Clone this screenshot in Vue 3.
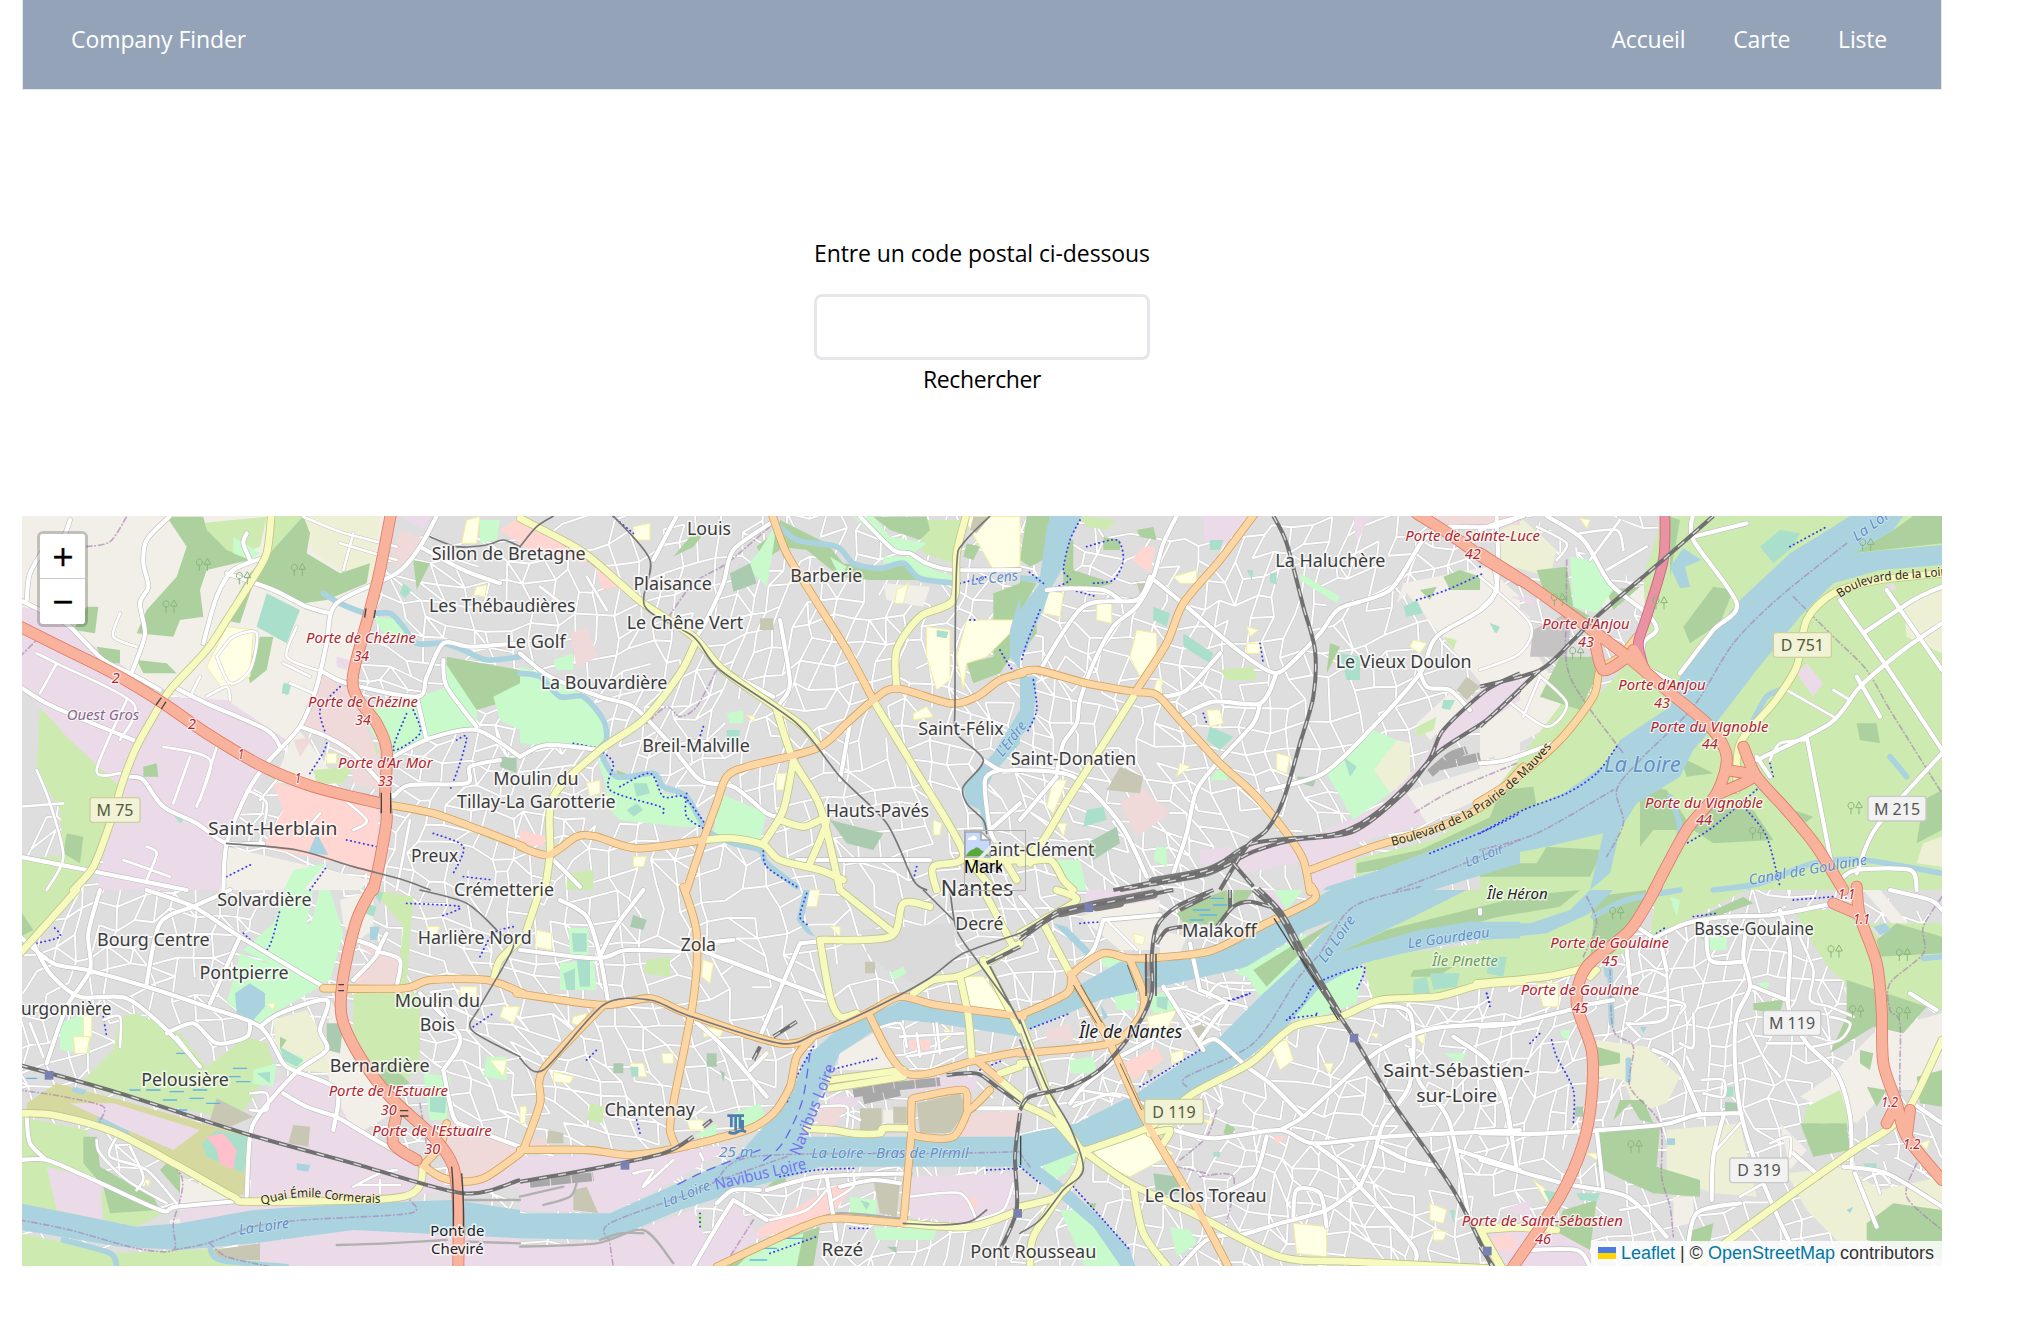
<script setup>
const links = ['Accueil', 'Carte', 'Liste']

// Map sheets: every sheet has its origin on the page and is drawn at three units per pixel.
const sheets = [
  {
    x: 20, y: 510,
    areas: {
      land: '0,0 1130,0 1060,290 980,500 860,640 780,720 360,500 0,290|760,820 830,650 960,820|620,1010 1050,1110 1020,1140 610,1140',
      industrial: '0,290 60,300 300,460 420,560 620,570 800,690 700,840 620,1000 600,1140 230,1140 300,830 140,680 50,580 0,530|950,440 990,450 980,480 950,470|1140,18 1230,18 1210,60',
      homes: '70,18 280,18 230,50 100,70|820,340 900,370 860,620 830,650 750,610 790,470|50,780 150,760 200,830 120,880 50,870',
      field: '850,18 1080,18 1060,200 960,180 880,130',
      grass: '740,18 850,18 830,120 760,160|60,590 150,680 210,720 340,700 300,850 230,1070 150,1140 0,1140 0,1040 130,1040 120,900 50,780|540,40 740,20 720,110 640,140 560,80|950,660 1040,660 1080,730 1000,740|880,780 1000,770 970,820 890,820',
      retail: '760,820 1080,880 1060,1100 960,1060 730,1010 790,900|1440,60 1500,20 1500,100',
      office: '900,490 990,540 1060,700 1100,850 1000,820 990,740 840,640|1140,60 1220,90 1140,190 1110,150|820,690 880,680 840,740',
      wood: '440,20 550,20 560,60 620,120 690,150 560,180 540,240 550,320 480,330 460,380 350,370 380,300 470,200 500,110|850,18 870,70 860,130 960,190 1050,160 1040,220 920,270 850,280 700,220 660,340 610,330 690,190 740,140|200,290 235,290 225,370 160,360|230,410 300,420 300,460 250,460|350,450 440,460 470,490 370,490|720,380 760,380 740,480 690,520 680,480|370,770 410,760 415,800 370,800|140,970 190,980 180,1060 130,1030|1180,150 1230,160 1190,240|1280,440 1500,480 1500,560 1370,600 1280,560',
      park: '1050,600 1110,590 1190,560 1220,690 1110,740 1050,660|640,80 720,130 690,150 640,130|1270,450 1280,530 1200,560 1220,690 1370,650 1370,600|1060,320 1150,330 1190,400 1090,370|1420,560 1500,520 1500,660 1440,630|820,1080 920,1060 850,1140 790,1140|1380,30 1440,30 1430,90 1380,100',
      school: '560,470 620,350 700,360 690,500 610,540|1340,30 1380,20 1370,100 1325,100|1370,230 1400,225 1395,260 1360,255|920,730 950,730 950,760 920,760',
      pitch: '740,250 840,300 800,400 710,350|1150,220 1175,240 1155,265 1140,250|790,520 815,520 805,555 785,550|460,915 495,925 480,940',
      cemetery: '1445,740 1490,745 1490,790 1440,770', brown: '', water: '890,970 925,1035 865,1030',
    },
    lines: {
      stream: '910,250 960,280 1040,310 1110,310 1150,350 1190,400 1270,400 1330,420 1400,450 1500,440',
      border: '0,440 60,380|200,110 270,95 320,20',
      footpath: '1180,600 1200,670 1120,720 1160,610|1310,690 1340,680 1320,760 1290,840|960,530 900,600 920,700 870,790|980,990 1070,1010|1240,970 1330,1010 1300,1090|620,1100 700,1060|1330,1100 1420,1110|870,1140 920,1070',
      street: '430,710 570,750 530,890|50,430 110,460 340,580 300,690|110,460 60,550|510,740 460,880|590,710 540,870|320,570 230,780 300,790|300,310 280,380 350,410|540,500 510,560|560,560 620,530 630,570|590,440 640,380 710,370 690,480 630,520 590,440|960,100 1130,150|1000,70 970,180|850,20 960,65 1130,110|830,350 800,440 890,480|790,460 870,500|810,520 880,550|380,1010 410,1030 380,1110|310,1050 450,1100|680,840 740,880 720,1000|770,810 720,870|960,860 1040,930 1000,960|900,910 840,980|1130,1140 1170,930|50,780 90,880 130,1040 80,1140|0,890 130,880',
      white: '450,18 380,90 370,160 385,230 360,280 375,370 350,450 330,500|0,270 100,320 150,350 250,450 330,490 420,540|620,190 760,240 860,290 930,310|1250,18 1200,110 1130,190 950,280 920,400 890,530 840,650 740,760 680,850 620,1000 610,1140|840,650 920,680 1000,730 1120,860|0,530 100,590 340,690|330,800 370,810 430,890 530,940 620,1000 730,1000|0,1040 200,1080 350,1110 500,1140|740,140 640,180 590,260 550,400|900,480 980,520 1190,560 1220,500 1270,400 1350,410 1500,400|1120,740 1230,685 1370,660 1500,740|1120,860 1170,825 1340,820 1350,770 1440,750|460,530 560,580 740,660 780,710|1270,450 1280,530 1370,650|1190,560 1220,690|150,30 130,80 80,110 30,190 20,270|680,70 670,100 690,150|1200,110 1330,180 1440,220',
      tram: '620,1000 830,1020 1000,1070 1150,1110 1230,1140|1230,80 1310,110 1400,105 1450,90 1500,110',
      yellow: '755,0 740,130 690,220 620,330 560,420 450,540 400,620 350,710 310,810 270,940 220,1070 160,1140',
      orange: '1110,885 1240,910 1380,960 1510,1010',
      red: '0,350 120,410 280,490 430,580 560,670 730,770 880,830 1080,880|1115,0 1080,180 1050,300 1000,490 1010,560 1070,640 1100,720 1095,860 1100,930 1080,1050 1060,1140',
      trunk: '', rail: '', yard: '',
    },
  },
  {
    x: 520, y: 510,
    areas: {
      land: '1090,220 1230,230 1210,290 1100,270', industrial: '', homes: '', field: '', grass: '1200,30 1340,30 1300,160 1210,130|140,1090 220,1080 220,1140 140,1140',
      retail: '0,20 70,60 150,90 210,160 120,140 0,110|220,160 270,170 330,240 280,230 250,240|0,960 80,980 70,1010 0,1000',
      office: '150,370 200,355 235,440 170,470',
      wood: '780,30 920,100 970,160 1090,170 1190,160 1220,210 1050,210 960,200 860,120 780,110|710,110 770,60 780,120 730,150|1420,250 1500,220 1500,400 1440,490 1360,520 1340,460 1420,440|510,80 560,60 520,110 460,140|150,600 190,600 150,680 120,650|290,780 340,800 340,830 290,830|1060,20 1110,60 1200,90 1230,60 1220,20|1340,100 1380,110 1360,150 1330,140',
      park: '0,470 100,500 200,560 260,650 240,720 0,700|230,740 280,800 400,790 430,850 500,860 560,950 480,950 300,930 270,900 250,800|600,850 740,910 720,990 580,970|770,40 760,110 740,230 680,170 720,120|1000,20 1060,20 1110,80 1220,100 1180,130 1100,110|1090,140 1190,140 1240,180 1310,200 1300,220 1200,200 1150,160 1090,160|620,610 670,600 670,640 630,640|930,140 980,170 960,200|100,450 160,430 160,480 110,480',
      school: '1330,20 1500,20 1500,170 1420,180 1380,110|1340,330 1480,330 1470,370 1400,440 1340,460 1330,540 1310,440|1220,350 1290,360 1290,510 1250,540 1220,440|340,50 390,40 390,90 340,90|1180,610 1220,590 1240,620 1180,630|200,820 240,810 240,850 210,860|1130,240 1165,220 1150,280 1125,280|770,790 800,790 790,840 770,840|1240,930 1265,940 1260,975 1240,975|680,615 705,620 700,635|340,1040 380,1040 370,1070 340,1070',
      pitch: '320,900 350,880 370,900 340,920|340,820 380,820 390,850 350,860|1250,360 1285,365 1280,385 1250,380|620,660 660,660 655,710 620,700',
      cemetery: '630,190 690,160 710,220 640,245|930,930 1090,970 1060,1020 980,1000',
      brown: '720,325 760,325 760,360 720,360|1360,20 1410,20 1370,70 1350,60',
      water: '1500,260 1470,360 1470,440 1500,480|1500,600 1420,730 1330,830 1340,880 1380,900 1390,960 1410,960 1390,860 1420,790 1500,700',
    },
    lines: {
      stream: '760,30 830,90 950,110 1000,160 1080,175 1150,160 1200,205 1310,220|0,490 60,500 120,560 190,560 250,630 260,690 240,720 290,800 400,790 430,830 500,860 560,960 640,1000 720,1020 740,1060 830,1130',
      border: '750,50 620,160 520,220 440,330|590,480 530,590 480,620 440,590 380,640|370,280 200,150 80,70',
      footpath: '240,720 280,760 270,840 420,890 430,910|300,830 390,790 430,860 490,860 540,920 560,950|500,850 500,920 560,960|280,20 340,70|1320,220 1400,200|1440,420 1470,470 1500,500|550,650 540,680|1190,1070 1180,1110|160,700 240,715|730,1010 740,1070 830,1130|1350,330 1370,330',
      street: '60,230 150,300|200,200 260,300',
      white: '750,40 640,120 610,220 560,330 530,380|1020,20 1120,120 1170,130 1220,160 1300,180 1500,180|0,430 90,500 240,560 340,590 440,690 540,810 640,830 740,910 780,920|0,740 80,705 240,720|470,18 400,150|1390,750 1440,780 1500,780|1440,780 1395,810 1410,960 1430,1000|100,1050 180,1130|990,640 960,810|830,1050 1230,1050|780,330 810,520 780,580|610,480 760,560|1410,960 1500,880',
      tram: '280,18 390,150 375,290 520,380 600,480 830,640 960,800 1100,940 1180,1110 1220,1140|0,110 50,50 100,18|1410,18 1330,100 1310,170 1305,580 1310,670 1390,750 1330,830 1340,880 1390,930 1400,970',
      yellow: '0,25 180,120 300,220 370,280 520,380 610,480 780,600 850,650 890,700|525,400 480,490 370,630 240,720 100,860 90,1030 75,1140|1340,10 1310,130 1300,270 1200,320 1130,420 1130,535|1065,580 1180,770 1330,1030 1240,1070 1250,1140|770,600 820,750 900,890 960,1140|820,750 790,900 730,1000|780,930 850,950 920,930 870,1060|550,990 640,985 730,1005 780,1050 900,1080 970,1110|1330,1030 1420,1050 1500,1050|1330,1030 1420,1140|1430,1010 1490,1110',
      orange: '755,10 800,130 880,260 980,420 1060,570|0,1010 85,1035 170,980 230,980 350,1015 550,990|500,1140 550,990 590,880 620,800 680,770 890,715 980,640 1060,570 1130,535 1290,580 1370,560 1440,510 1510,490',
      red: '', trunk: '', rail: '', yard: '',
    },
  },
  {
    x: 1020, y: 510,
    areas: {
      land: '1130,280 1150,220 1400,170 1500,260 1500,470 1400,540 1250,360 1160,250|1380,640 1500,580 1500,730 1430,760|1200,830 1500,740 1500,810 1220,940 1160,850|1190,640 1300,540 1350,580 1230,690',
      industrial: '550,18 690,18 600,120 550,90|1000,18 1050,18 1010,100|1500,500 1500,570 1380,650 1260,730 1140,860 1000,960 830,1060 670,1090 640,1060 700,1000 950,970 1080,890 1200,760 1280,640 1400,520|850,990 1160,850 1220,940 1010,1000 1000,1140 880,1140|540,1020 640,1010 600,1080 540,1060',
      homes: '', field: '1430,60 1500,50 1500,150 1440,130|1060,780 1130,690 1170,700 1170,800 1110,850',
      grass: '1000,1050 1240,990 1500,830 1500,880 1240,1020 1010,1100|180,18 290,30 260,60 200,50|600,480 700,470 710,510 620,510|1190,650 1250,620 1240,660 1190,680|1270,380 1310,390 1300,420',
      retail: '370,110 405,110 390,190 335,150', office: '300,880 370,835 450,910 350,980|1240,18 1500,18 1500,45 1290,45',
      wood: '0,210 50,220 0,310|20,18 90,18 70,150 30,170 0,150|130,90 160,90 160,180 280,220 200,240 130,230|0,340 50,320 50,370 10,420|350,60 400,50 410,90 360,80|1270,200 1320,180 1380,200 1380,240 1290,240|930,400 960,410 920,490|1010,1060 1200,1020 1500,880 1500,910 1240,1020 1080,1080 1010,1090|250,80 300,90 300,120 250,120|1200,240 1250,230 1230,270',
      park: '920,790 1060,660 1130,690 1060,780 1110,850 1000,930|110,1050 180,1050 200,1140 130,1140|410,1010 440,1010 440,1070 400,1050|840,190 960,260 950,280 840,210|590,780 630,780 620,810 570,810',
      school: '350,360 410,370 410,450 360,500 330,440|80,240 130,250 120,320 70,310|230,280 275,280 275,340 230,330|100,810 140,810 100,910 80,890|560,600 600,600 610,640 570,650|770,730 810,740 800,790 770,780|460,200 530,180 530,220 480,220|680,400 720,400 720,430 680,430|1180,390 1220,400 1200,430 1170,410|480,760 510,770 470,800|410,510 430,510 420,550 400,550|680,350 715,360 690,380|110,940 140,940 130,980',
      pitch: '400,290 450,310 440,350 400,330|570,650 640,680 600,720 560,690|490,370 580,430 570,460 490,410|570,90 610,90 600,120 570,120|1150,290 1190,270 1210,310 1160,320|1270,570 1305,570 1290,600 1265,595|960,430 1020,440 1020,510 980,510|200,900 250,890 260,930 190,950|750,190 770,190 770,225 750,215|680,180 700,180 695,210|970,740 1010,770 990,800|1410,340 1440,350 1430,370',
      cemetery: '200,1000 290,950 300,1000 220,1050|830,800 890,800 880,830 840,820', brown: '300,770 370,800 360,850 260,840|1340,500 1380,530 1340,570 1310,540|350,220 380,220 360,250',
      water: '90,18 185,18 150,90 130,170 90,240 70,300 40,360 20,420 0,440 0,300 60,220 0,210 0,195 60,200 70,130 80,60|0,480 20,500 50,500 40,640 0,680|1500,910 1240,1020 1080,1080 920,1130 910,1140 1240,1140 1500,1060',
    },
    lines: {
      stream: '', border: '1130,1140 1260,1090 1500,990|1490,760 1300,840 1180,910',
      footpath: '180,30 150,90 130,180 150,210 90,240|200,110 290,90 310,150 280,210 220,220|60,300 20,400 5,450|40,510 50,600 20,670|120,230 230,260|1190,270 1280,240 1390,190|1230,1030 1400,960 1500,910|720,400 730,460|550,610 560,640|70,220 20,180|600,1080 640,1030',
      street: '',
      white: '470,18 430,100 400,200 350,290 280,350 220,460 180,570 170,640 130,700 110,790|0,780 160,800 300,940 380,1100|390,200 500,290 640,410 740,480 790,480 900,370 960,295 1110,240 1210,90 1290,50|60,480 190,290 350,270 390,200|430,560 500,540 600,430|480,620 580,575 720,580 770,490|720,580 700,640 600,750 530,840 500,970 460,1090|1430,18 1420,260 1250,380 1200,490 1050,660 910,790 740,840|1500,20 1420,50 1290,50|1190,450 1220,530 1290,540 1350,600|80,240 150,235 250,240 300,270|0,930 110,800',
      tram: '',
      yellow: '340,560 220,750 130,890 70,990 0,1060|0,1060 90,1050 130,1110 160,1140|0,1020 30,1060',
      orange: '705,10 600,150 490,280 440,400 350,540|-10,492 50,480 200,520 340,545 410,555 480,630 600,760 700,850 800,970 850,1050 870,1145|1510,770 1400,880 1260,950 1060,1010 870,1080',
      red: '1190,10 1300,80 1400,150 1500,210', trunk: '',
      rail: '760,18 800,100 850,290 885,420 880,560 840,700 790,870 740,960 680,1010 600,1140|1500,490 1400,540 1270,660 1220,760 1080,900 950,970 700,1000 560,1080 280,1140|1500,540 1400,630 1250,730 1150,850 1000,965 820,990 700,1025 560,1090 300,1140|640,1060 700,1130',
      yard: '1230,790 1290,740 1340,720|1250,770 1380,740', depot: '400,1115 560,1085 650,1040',
    },
  },
  {
    x: 1480, y: 510,
    areas: {
      homes: '150,18 400,18 530,80 520,190 400,200 300,120|1000,640 1050,500 1160,470 1140,600 980,690|520,500 600,420 700,330 780,270 600,500',
      grass: '540,18 1386,18 1386,1140 0,1140 0,900 260,560 350,560 500,400 490,200 530,80',
      land: '0,180 50,240 150,320 150,400 250,560 230,640 0,760|340,200 420,290 370,300|1060,260 1386,220 1386,480 1240,450 1180,500 1160,600 1060,680 1050,720 920,760 820,740 850,650 920,540 970,460|0,830 0,770 210,690 120,790|440,250 520,210 490,300|1330,960 1386,930 1386,1080 1300,1060|800,240 900,170 600,500|900,800 960,790 940,830|1180,520 1220,540 1190,560',
      industrial: '0,560 180,490 0,640|980,460 1030,520 1000,560 950,490|90,260 160,260 160,285|1200,240 1240,220 1250,240',
      field: '60,60 130,30 230,120 210,200 60,160|1270,280 1386,240 1386,430 1280,380|1330,1000 1386,980 1386,1070 1310,1060', retail: '', office: '0,18 130,18 0,60',
      wood: '170,180 260,170 280,290 350,330 330,380 200,270|240,440 340,440 350,500 300,600 180,560|1386,18 1300,18 1240,60 1120,130 1386,100|60,840 160,830 170,890 20,950|700,890 820,900 880,990 700,1000 640,960|1130,640 1190,640 1200,700 1140,690|1330,870 1386,840 1386,960 1310,1000|700,230 760,240 720,340 630,400 610,350|480,820 560,840 640,960 520,960 480,1010|0,1060 170,1060 200,1010 370,1020 330,1100 0,1100|600,740 700,790 620,800|930,150 1060,70 990,170|940,900 1000,920 960,950|380,240 480,230 400,300|570,20 600,30 570,200',
      park: '270,140 340,150 400,240 350,310 280,290|890,190 980,110 960,180', school: '300,25 330,30 320,55', pitch: '840,110 900,60 960,70 940,110 880,160|30,340 55,350 45,370|760,1130 820,1120 810,1140', cemetery: '', brown: '', quarry: '160,360 280,300 260,440 150,440',
      water: '1270,18 1110,18 1060,50 930,130 780,270 700,370 600,500 570,590 420,690 380,760 250,850 130,900 0,960 0,1050 200,1010 370,970 330,1140 390,1090 420,960 470,880 600,800 640,720 700,650 830,480 960,320 1060,220 1200,180 1386,165 1386,105 1120,130 1240,60|570,170 610,115 665,150 615,170 630,230 600,235',
    },
    lines: {
      stream: '1386,1090 1150,1050 1000,1060 840,1120 700,1140|820,630 860,560 900,540|560,1090 600,960 570,860|1230,740 1280,800',
      border: '1100,100 900,260 760,400 640,590 480,750 410,840 430,940 380,1040|0,1020 170,970 400,840|260,150 260,300 270,500 430,730|940,260 1060,380 1160,480 1230,600 1386,850',
      footpath: '930,110 1040,50|0,970 130,900 260,850 350,790 410,710|800,900 860,980 900,1130|840,830 700,950 620,1000|0,170 20,140|870,760 880,800', street: '870,750 900,700 980,690|1060,540 1110,570|170,50 260,100 230,150|300,70 410,60 430,120|380,180 500,110|330,150 420,30|920,540 1060,620|0,480 120,430 150,340 0,200|170,490 260,580 200,650 80,570|130,620 180,500',
      white: '640,10 640,90 770,280 700,360 600,490|130,18 50,40 0,60|200,18 310,90 390,220 500,310 530,360 490,400 500,470 570,510|1386,730 1190,950 1130,1090|980,680 1060,1090|830,750 1050,640 1140,530 1270,420 1386,340|1080,270 1220,470 1386,720|1080,1110 1130,1080 1290,1080 1310,1140|0,300 50,240 40,160|640,80 800,40|830,740 870,800|1150,370 1300,270 1386,230|1220,240 1386,480|1130,500 1200,620|0,760 80,750 220,700', tram: '',
      yellow: '770,840 780,700 880,580 950,470 980,330 1060,250 1200,210 1386,190',
      orange: '470,380 420,440 360,480 340,560 240,690 100,810 -10,880',
      red: '0,130 140,220 280,320 430,430 560,540 690,650 740,740 710,850 620,960 520,1145|790,710 830,800 920,900 1010,1010 1090,1140|740,780 820,800 720,850|345,400 370,480 430,450|460,420 500,490',
      trunk: '555,10 550,150 500,320 475,400 490,470',
      rail: '700,18 560,140 350,320 280,390 180,480 0,530|180,480 0,650', yard: '',
    },
  },
  {
    x: 20, y: 890,
    areas: {
      land: '930,330 1100,600 1150,650 1000,740 940,700 920,500|480,860 660,930 640,950 480,960|450,990 560,970 560,1010 450,1010|960,30 1060,0 1060,120 1000,160 970,100', homes: '',
      grass: '0,0 170,0 40,160 0,190|300,380 350,370 480,430 560,530 680,440 740,460 760,520 700,620 650,690 300,620 180,580 280,480|0,680 200,720 230,900 430,970 350,1010 0,940|1000,310 1200,310 1200,540 1100,600 1000,430|1060,0 1180,20 1160,290 1130,290 1150,110|0,1030 290,1090 720,1070 720,1130 0,1130',
      industrial: '740,590 830,545 930,590 1000,720 1200,800 1290,900 1100,930 690,930 700,720|80,830 240,870 250,990 110,960|480,960 700,930 1170,930 1170,945 480,1000|720,1060 1000,1020 1500,1040 1500,1130 720,1130|1330,870 1500,810 1500,890 1330,910',
      field: '760,390 860,360 910,440 930,550 830,540 770,500', retail: '1000,240 1050,250 1050,285 1010,285', office: '1000,150 1140,200 1120,290 1010,290 1060,200|1260,690 1500,760 1500,810 1330,870 1290,800',
      scrub: '20,640 110,580 300,630 690,740 680,910 640,920 480,830 280,720 20,670',
      wood: '190,740 230,740 240,830 400,920 420,960 270,970 250,890 190,820|440,820 480,850 480,910 420,840|0,60 40,120 0,140|780,440 800,450 780,480|1060,580 1110,520 1170,580 1110,600',
      park: '880,0 860,100 970,130 930,270 880,290 670,180 760,100 800,0|900,0 930,0 970,130 870,110|660,190 770,230 900,290 760,370 720,400 620,340|120,400 200,370 210,490 120,480|700,540 770,520 760,590 700,580|770,480 850,500 850,540 790,530|1210,550 1290,560 1280,690 1230,690|1400,500 1460,500 1460,570 1390,560',
      school: '190,380 215,370 215,440 190,440|160,440 210,440 200,490 165,490|1320,290 1370,290 1370,330 1320,320|1450,350 1500,350 1480,400 1440,380|740,340 765,340 760,360|1410,510 1460,510 1450,560|370,870 390,870 385,890|1220,110 1260,110 1240,150',
      pitch: '590,720 690,740 670,850 560,800 545,760|1060,10 1090,5 1080,40|1040,40 1070,50 1060,80 1035,70|780,470 850,510 830,530 790,510|710,550 750,545 750,580|1230,620 1280,620 1275,670 1230,665',
      pink: '560,740 610,730 650,780 640,840 600,820 590,780', dusk: '150,640 280,640 540,720 460,780 300,710',
      cemetery: '920,400 970,400 960,490 920,480', brown: '590,625 700,680 630,710 570,690|820,705 870,710 865,770 805,760|720,1060 580,1080 600,1110 720,1110',
      water: '0,940 150,970 350,1010 480,1000 700,960 1000,940 1300,930 1500,960 1500,1045 1000,1020 700,1060 480,1080 300,1070 0,1020|645,310 690,280 735,310 735,350 700,390 650,370|1050,110 1080,110 1070,150 1050,150|160,590 200,600 190,615 155,605|830,820 870,825 865,845 830,840',
    },
    lines: {
      stream: '130,1050 270,1090 290,1130|570,1070 600,1110 800,1130|240,690 320,730',
      border: '0,990 150,1020 350,1075 460,1080 460,1000 480,850 280,730 240,700 250,650 130,620 0,600|460,1080 560,1060 700,1010 850,990 1170,970 1170,930|570,1060 620,1100 750,1130|1200,640 1230,830',
      footpath: '50,160 120,140 100,110|670,130 740,180 780,60|1160,40 1320,50 1260,80|1380,200 1420,130 1480,110|250,380 260,440|1360,410 1420,370',
      marsh: '470,490 500,490|640,535 680,535|620,560 660,560|380,600 420,600|450,605 490,605|520,600 560,600|430,630 470,630|510,625 550,625|460,660 500,660|560,640 600,640|650,575 690,575|330,600 360,600|20,565 50,565',
      street: '230,750 240,790 320,870 440,940|290,740 270,800 380,840 470,940|330,770 370,860 350,900|0,380 60,360 120,370|30,400 70,500|1000,890 1080,850 1130,840|1010,885 1140,885|1080,870 1080,910|250,390 300,380 300,470|690,610 740,610 740,660 690,660|470,440 540,530',
      white: '0,140 100,220 200,240 380,290 560,350 720,410 790,520 830,545 950,600 940,720|380,0 520,50 660,140 910,290|720,410 780,370 920,330 900,420 920,480 830,545 720,670 690,740 680,920|40,160 90,250 180,320 320,325 440,420 540,530|240,0 205,130 210,240 140,350 80,520|520,50 420,100 380,280|660,140 570,340|440,430 520,400 590,460 680,440 690,400|0,810 80,810 200,860 420,960 470,950 690,930|20,680 30,760 80,810|950,680 1050,740 1190,820|790,610 860,650 950,680|1010,150 1075,185 1000,270|1270,540 1300,680 1340,710 1500,770|1075,185 1140,210 1130,290|1200,310 1320,440 1270,540|1100,130 1070,190|630,0 520,50',
      tram: '1500,500 1355,420 1380,350 1480,170 1440,130 1340,40 1200,0',
      yellow: '170,0 90,90 0,190|0,670 100,675 280,725 480,830 640,920 700,935 1150,920 1210,830|1500,150 1440,210 1420,270',
      orange: '910,295 1150,295 1230,270 1400,270 1510,310|1200,820 1260,860 1330,875 1400,860 1500,790|1215,820 1260,770 1280,700',
      red: '1060,-10 1010,90 970,260 965,380 1020,500 1110,620 1240,740 1300,830 1315,960 1315,1130|1130,670 1120,760 1190,810', trunk: '',
      rail: '0,525 300,610 690,735 1000,820 1330,910 1500,870', yard: '',
      spur: '1330,930 1500,930|950,1065 1100,1060 1280,1050|1340,1055 1500,1060',
    },
  },
  {
    x: 520, y: 890,
    areas: {
      land: '960,490 1060,430 1140,540 950,540|1090,660 1120,660 1120,700 1090,700', homes: '', field: '', grass: '500,990 550,970 550,1020 520,1030|380,210 450,200 450,260 370,250|210,640 250,650 250,700 200,690',
      industrial: '0,800 450,790 650,760 450,880 270,970 0,960|0,1070 270,1050 520,960 560,1050 640,930 720,1040 600,1130 0,1130|1170,860 1480,850 1480,960 1340,1000 1170,980|1220,560 1370,560 1370,600 1160,600|930,620 1020,620 1010,650 930,650',
      retail: '710,1020 960,880 1000,890 930,980 720,1045|1340,920 1375,925 1370,955 1340,955|1170,450 1230,450 1230,480 1170,480', office: '1300,740 1360,670 1500,660 1500,740|900,650 980,650 940,710 890,710|0,760 60,740 100,760 0,780',
      wood: '600,1130 750,1060 900,1010 880,1130|890,820 940,820 930,835|740,890 790,850 800,880',
      park: '640,670 720,640 740,690 660,730|520,740 590,700 590,740|990,920 1070,930 1070,980 990,980|1060,1010 1250,1020 1240,1050 1070,1050|120,220 220,210 230,300 120,300|145,115 205,115 205,195 150,195|1110,250 1150,230 1160,250 1120,270|700,1080 850,1030 830,1130 650,1130',
      school: '50,120 95,130 95,180 45,170|1330,260 1390,260 1480,380 1350,350|160,380 200,370 190,410 155,400|500,690 550,690 550,720 510,720|550,410 610,420 600,440 550,440|860,0 900,0 890,50 860,50|330,520 370,520 380,560 340,560|100,545 160,560 150,580 100,575|425,490 460,490 460,520 430,520|550,210 580,220 570,280 545,260|0,650 20,650 15,700 0,700|930,110 960,110 960,140|720,490 750,495 730,510|1270,420 1290,420 1285,450',
      pitch: '155,130 200,130 200,185 160,185|130,250 165,235 165,300 140,300|170,210 210,210 210,290 180,290|330,530 355,530 355,560 335,560|1020,930 1050,940 1040,960',
      cemetery: '340,75 380,90 370,120 330,110|560,490 590,490 590,530 560,530|280,520 310,520 310,550 280,550|600,540 615,550 610,575|1100,1070 1130,1070 1130,1090', brown: '1190,640 1320,610 1340,660 1290,730 1200,730|1020,655 1085,655 1085,720 1020,720|1060,870 1140,880 1130,980 1080,970|160,900 200,890 235,970 160,960|1120,650 1160,650 1160,700 1120,700|85,720 130,730 130,760 80,760|1035,215 1065,215 1065,250 1035,250',
      water: '0,970 270,970 450,890 650,800 740,700 810,620 860,500 950,420 1150,330 1500,375 1500,440 1250,400 1150,390 1050,430 960,490 900,620 850,740 1500,740 1500,830 900,830 850,850 700,890 480,960 270,1050 0,1045|850,0 870,0 850,90 885,140 860,130 830,90',
      plain: '1020,120 1300,100 1310,200 1200,290 1100,240 1040,190',
    },
    lines: {
      stream: '',
      border: '1500,785 1300,790 700,800 560,890 270,1000 270,1060 280,1130|800,800 600,870|700,990 630,1100',
      ferry: '870,490 850,620 820,700 780,770 720,820|720,780 640,810 540,850 470,885',
      footpath: '930,540 1070,505|880,470 830,560 800,640|780,860 890,840 1000,835|1400,840 1500,835|540,970 540,1020|750,1090 890,1040|200,510 230,480|860,10 840,80 870,110|990,1015 1050,1015|350,690 360,730|1380,540 1450,510', marsh: '780,1045 850,1045|720,1075 770,1075|690,1110 740,1110', street: '900,650 980,650 980,710|980,670 1020,690|920,900 860,960 750,990|1000,850 1000,890 940,930|1170,920 1320,910 1370,990|340,850 400,840 370,890 460,810|1480,880 1450,960 1370,990|1060,420 1140,400 1160,470|1160,500 1330,470|1190,430 1200,500|1250,400 1260,490|1140,440 1330,430|500,690 560,650|540,790 550,810',
      white: '120,30 200,80 240,200 265,340|0,180 230,205 320,180 480,185|540,180 790,275 940,330|840,160 720,440|540,160 640,150|740,900 900,860 1170,850|520,1130 590,1010 640,930|920,860 940,980 950,1050|1500,655 1370,655|590,940 640,900 720,900|840,160 890,155|690,540 740,490|370,0 280,120 240,200|500,370 620,480 740,620|640,930 740,990|960,890 1060,870 1140,880',
      tram: '1210,0 1300,90|1290,0 1310,120 1370,210 1480,360|1500,130 1330,190 1220,270 1050,360 890,430 780,460 500,375 390,330 250,345 70,540 0,505|1150,1000 1260,1005 1350,995 1400,960|1410,230 1500,400',
      yellow: '900,150 1110,140 1150,40 1230,50|900,150 930,320 960,380 1010,370|960,0 1110,120|1180,310 1240,270 1310,260 1380,230 1500,160|1320,260 1345,380 1355,500|1390,0 1480,170|1390,210 1500,420|930,570 1150,540|930,595 1150,560|860,715 940,720 1000,730 1080,730 1090,715 1170,715|1150,1000 1350,1010 1500,960|1440,570 1500,620|1440,550 1500,530|60,0 20,120',
      orange: '490,-10 530,130 520,330 460,640 450,720 470,775|-10,310 250,345 390,325 500,370 780,460 900,430 1040,370 1140,320 1250,345 1510,380|250,345 70,540 60,640 10,780|0,780 200,780 330,795 470,775 680,720 760,670 810,590 830,500 880,440|1045,370 1160,550 1370,510 1500,485|1370,510 1440,570|1180,625 1330,600 1345,660 1410,600|1175,630 1175,720 1200,740 1300,740 1345,660|1175,720 1150,1000|590,1130 850,1010 950,985 1150,1000', red: '', trunk: '',
      rail: '0,875 200,840 430,790 520,740|1500,640 1430,590 1370,550 1280,555|1500,670 1485,800 1490,960 1440,1080|1500,170 1400,220|760,440 830,395|550,710 575,690|700,510 720,470',
      yard: '1000,610 1120,590 1260,575|30,880 220,860|1030,630 1140,605', spur: '0,1070 230,1060 370,1020 460,1120|70,945 150,920 170,880|0,920 130,890|240,1050 300,1030 370,1030|650,1105 850,1010 950,970 1140,985',
    },
  },
  {
    x: 1020, y: 890,
    areas: {
      land: '180,80 260,50 420,30 400,180 300,180|420,120 500,140 480,190 420,190', homes: '', field: '',
      grass: '1340,0 1500,0 1500,95 1350,95 1200,120 960,185 1180,80|1150,190 1500,145 1500,270 1220,320 1060,330 1030,220|280,750 320,750 320,770 280,770',
      industrial: '1390,1040 1500,990 1500,1130 1440,1130|200,0 430,0 410,30 200,60|720,0 760,0 790,50 780,70', retail: '310,520 410,470 430,510 340,570|760,740 800,735 770,765|1400,1050 1460,1030 1500,1060 1440,1070', office: '80,420 150,400 160,450 80,460',
      wood: '960,185 1100,120 1500,20 1500,60 1200,150|470,70 560,20 620,0 630,60 590,105 490,100|640,0 700,0 680,30 640,40|1180,240 1300,230 1250,260 1170,260|620,700 645,715 635,740 610,730|200,940 230,940 220,960',
      park: '640,250 860,130 830,220 720,320 680,260|800,390 880,290 1030,225 1010,340 900,380|120,960 190,960 260,1020 330,1140 200,1140|60,820 180,780 140,850 100,870|380,320 450,300 460,360 400,370|150,510 220,500 230,550 150,550|280,310 350,310 350,360 290,360|760,0 850,0 800,60|450,1010 510,1020 530,1060 470,1100|1270,490 1340,490 1320,520|240,195 330,210 310,235 250,230',
      school: '220,780 370,730 460,790 330,860 240,820|820,1000 920,1010 920,1100 830,1090|750,460 800,450 820,510 780,540|380,380 470,360 440,420 390,420|1230,940 1280,960 1270,1000 1230,990|910,520 940,520 930,550|1190,440 1215,430 1210,465|1240,1020 1280,1025 1270,1050 1240,1050|450,490 490,480 490,510 460,520|340,130 375,140 370,165 345,160|550,690 580,690 570,705|1050,430 1075,430 1070,445',
      pitch: '1180,270 1220,260 1230,310 1180,310|1230,250 1320,250 1310,290 1240,300|410,320 445,320 440,360 410,350|1410,200 1460,200 1450,260 1400,250|580,785 600,785 600,800 580,800|1290,960 1305,960 1300,1000', cemetery: '400,850 470,860 480,910 410,920', brown: '530,400 555,410 560,460 530,470 510,430|380,540 400,540 390,565',
      water: '0,385 240,250 300,215 430,215 600,180 760,100 880,30 930,0 1340,0 1180,80 960,185 1200,120 1350,95 1500,95 1500,145 1350,150 1150,190 1030,220 900,290 800,410 690,500 520,600 370,710 190,780 60,830 140,890 260,1000 330,1080 350,1140 310,1140 220,1010 80,890 0,830 0,735 170,700 350,610 600,440 730,310 830,220 940,90 860,120 680,230 600,250 420,290 240,330 0,430|100,100 140,110 230,200 210,210|240,340 265,380 250,390',
      isle: '860,140 940,95 830,200 740,290 700,240',
    },
    lines: {
      stream: '', border: '500,590 500,560 700,460 830,270 900,190 1000,50 1200,-10|0,790 30,830|480,810 560,740 590,660|540,860 640,860 620,1000|470,830 560,850',
      footpath: '800,390 850,340 890,280 1030,230 1010,300|810,385 890,375|160,890 250,990 330,1080|590,345 690,310 640,330|360,590 540,480|20,420 150,370|180,100 250,95|480,1120 540,1060|1400,310 1410,350|0,830 60,880|890,370 885,390',
      marsh: '520,60 570,60|540,75 590,75|570,25 610,25|580,45 620,45|510,90 550,90', street: '160,650 280,610 370,640|430,300 500,290|560,320 600,280 690,280|500,370 600,420|520,390 600,340 680,350|180,600 300,620|260,90 350,180|430,440 540,400',
      white: '510,160 540,300|250,90 420,75|550,460 590,450 680,530 750,580 850,680|430,290 550,480|280,510 430,430|460,720 580,745 780,720 880,760 1100,740 1500,720|780,720 850,680 960,580 1080,480 1240,415 1500,400|880,760 960,820 1020,890 1180,1070 1180,1130|1020,890 920,960 780,1000 650,1040|1050,350 1170,370 1170,580 1090,700 1060,800 1020,890|1170,480 1200,580 1270,660 1300,740 1350,1000|1300,440 1400,510 1450,600 1470,720|1310,780 1500,840|150,640 190,590 250,540 300,500|540,300 620,340 590,380 540,450|650,1030 560,1050 480,1130|580,920 700,860 740,740|820,980 830,900 900,910 920,1010|1080,770 1160,810 1260,830|250,90 220,180 160,240|0,20 60,90',
      tram: '0,390 80,590 150,710 190,840 130,900 60,990 0,1030|0,450 60,600',
      yellow: '0,130 70,90 170,30 110,0|70,100 150,250|1510,275 1380,285 1250,320 1080,330 960,380 820,410 690,520 520,610 390,710 200,780|190,780 170,850 110,920 0,950|0,640 100,690 180,780|200,790 330,880 540,980 780,1100 1000,1115 1500,1140|340,890 370,1030 450,1140|0,390 80,600 130,700 190,790|1380,1020 1510,1010|30,1140 40,1040 130,900|390,730 450,720 430,760|1370,1000 1450,1140|0,520 50,520',
      orange: '-10,380 140,310 160,250 250,190 330,205 450,200 580,180 740,100 880,30 875,-10|330,210 370,310 360,380 270,460 0,490|150,250 270,460 370,680 540,970 630,1140', red: '', trunk: '',
      rail: '700,0 780,80 860,230 1000,440 1120,640 1300,900 1420,1140|715,-5 790,75 870,225|750,50 690,35 640,50 590,110|630,0 630,60|580,0 470,50 410,110 395,200 395,310 350,410 250,530 150,590 30,620 0,660|570,15 480,60|0,150 120,70 300,30 460,0|0,135 110,65|410,160 440,120 490,110|860,200 960,370',
      yard: '385,200 388,310', depot: '120,68 260,38 400,12|230,50 300,38',
    },
  },
  {
    x: 1480, y: 890,
    areas: {
      homes: '1200,0 1386,0 1386,80 1250,50|1200,760 1250,770 1240,820 1190,810', land: '1150,0 1200,0 1300,120 1260,130|1270,400 1386,370 1386,600 1220,600 1130,700 960,620 1050,560 1180,430|580,920 640,920 640,1000 580,1010|900,700 980,780 930,840|1090,290 1120,290 1120,370',
      grass: '0,0 530,0 430,190 300,230 0,290|940,60 1060,60 1160,100 1386,100 1386,360 1160,330 1050,240 1010,180|980,650 1080,600 1110,700 970,700|530,0 800,0 640,80 510,140',
      industrial: '0,1020 160,980 330,1040 330,1130 60,1130|60,960 150,930 150,980|1170,110 1240,130 1210,160', field: '350,450 500,470 600,560 560,640 470,670 430,570 350,560|560,720 780,700 830,920 700,910 560,860|920,850 1100,830 1200,900 1386,860 1386,1060 1080,1060 980,960',
      retail: '20,1050 90,1030 110,1080 60,1080', office: '',
      wood: '330,20 500,0 470,80 400,190 330,210 340,100|0,60 100,20 300,0 240,50 0,90|1190,150 1250,100 1386,140 1386,190 1200,200|1100,270 1340,350 1270,430 1180,410 1050,490 1100,380|350,470 420,490 420,520 350,530|350,730 540,710 530,830 660,870 660,920 520,910 430,870 350,830|1160,1000 1240,940 1386,960 1386,1110 1160,1050|640,1020 700,1000 690,1060 620,1060|250,960 350,930 330,1080 220,1020|1310,560 1386,540 1386,650 1320,640|1140,480 1180,490 1170,540 1140,520|960,700 1100,700 1110,780 1000,800|420,630 490,630 520,700 480,690 450,640 400,690|820,340 910,330 900,370 820,360|1160,590 1220,600 1190,650|570,120 790,20 820,40 620,110|660,140 700,150 690,170',
      park: '670,145 740,140 740,180 680,180|830,280 870,275 860,300|240,420 270,420 265,450 245,440|570,20 600,30 590,80', school: '170,280 235,280 235,350 190,350|160,870 225,920 200,935|320,790 355,790 350,810|1320,760 1350,750 1340,780',
      pitch: '190,900 240,910 210,940|290,910 360,910 350,935 300,930|740,590 760,590 760,620 735,620|1150,820 1190,820 1190,835 1155,835', cemetery: '735,635 775,640 770,665 735,665|285,650 310,650 310,680 285,680', brown: '',
      water: '0,100 150,100 270,60 330,0 400,0 330,70 200,130 0,150|1180,110 1215,100 1235,120 1200,135|560,745 585,745 585,765 560,765|1100,960 1120,950 1110,970|370,230 400,240 395,270 375,260|480,410 500,410 490,430',
    },
    lines: {
      stream: '340,80 440,30 600,0|390,240 395,400|445,510 445,570|1386,200 1330,205', border: '320,20 350,100 310,200|390,240 400,420 460,470 450,590 540,700 545,860 570,950 580,1040|1386,20 1330,110 1330,190 1230,280 1230,360 1260,400 1260,600 1280,700|1310,820 1280,920 1386,1020',
      footpath: '215,450 230,500 280,600 280,700|150,460 180,430|640,80 710,70|20,310 30,340|530,130 560,110|940,30 1060,20', street: '440,260 510,240 560,260|480,310 610,340 600,370|560,250 560,380 490,400 440,400|640,370 640,470 600,460|620,500 640,540|665,570 730,570 730,620 670,610|800,400 850,500 900,560|860,460 970,460|1050,380 1110,400 1080,450 1000,470|440,400 480,440|950,120 1000,240 990,330 1050,350 1120,380|700,790 780,700|780,920 850,880|870,760 930,740 930,800|1150,870 1200,850 1230,880|1180,850 1200,910|420,960 480,950',
      white: '0,410 100,400 290,355|290,350 400,330|510,150 620,100 740,80 880,75 1060,40|800,100 790,200 810,290 770,380 765,520 785,680 850,880 930,1060|900,60 930,180 925,350 980,460 1070,550 1110,680 1115,830|1125,850 1190,1010|0,730 200,730 540,705 650,675 785,670|0,810 250,880 440,920 560,1040|470,110 530,150|730,680 700,800 695,930|1300,640 1386,700|1090,830 1220,850 1386,950|350,720 370,900|520,480 590,520 660,670|30,540 80,650 110,840|820,290 920,330|540,150 560,240|680,90 690,210 790,215|940,790 1020,860|140,1080 290,1080 330,1130|1230,0 1350,30 1386,60|620,1100 650,970 780,940|1290,310 1370,360|0,60 0,70|440,180 450,280', tram: '',
      yellow: '-10,280 200,260 330,230|1386,450 1290,650 1220,720 1110,790 870,960 640,1130|0,1020 60,1010 230,1020|330,260 350,240|0,1020 60,1130', orange: '',
      red: '530,-10 450,120 320,230 290,340 335,480 335,620 310,760 240,920 100,1130|1130,-10 1140,80 1190,220 1205,360 1210,520 1250,640 1280,740 1386,870|1060,40 1130,70|1220,700 1240,660|1290,660 1280,740', trunk: '', rail: '0,1070 40,1130', yard: '',
    },
  },
]

const areaOrder = ['plain', 'homes', 'land', 'grass', 'field', 'industrial', 'scrub', 'dusk', 'retail', 'office', 'quarry', 'wood', 'park', 'school', 'pitch', 'pink', 'cemetery', 'brown', 'water', 'isle']
const places = sheets.map((s) => `translate(${s.x} ${s.y}) scale(.33333)`)

// Joins the points of a road with a Catmull-Rom curve.
function curve(text) {
  const p = text.trim().split(' ').map((q) => q.split(',').map(Number))
  let d = `M${p[0]}`
  for (let i = 0; i < p.length - 1; i++) {
    const a = p[i - 1] || p[i], b = p[i], c = p[i + 1], e = p[i + 2] || c
    d += `C${b[0] + (c[0] - a[0]) / 7},${b[1] + (c[1] - a[1]) / 7} ${c[0] - (e[0] - b[0]) / 7},${c[1] - (e[1] - b[1]) / 7} ${c}`
  }
  return d
}
const split = (text) => (text || '').split('|').filter((t) => t.trim())
const areas = areaOrder.flatMap((kind) =>
  sheets.map((s, i) => ({ kind, at: places[i], d: split(s.areas[kind]).map((t) => `M${t}Z`).join('') })).filter((a) => a.d))
function roads(kind) {
  return sheets.map((s, i) => ({ at: places[i], d: split(s.lines[kind]).map(curve).join('') })).filter((r) => r.d)
}
const passes = [
  ['stream', 'stream'], ['marsh', 'marsh'], ['border', 'border'], ['footpath', 'footpath'], ['ferry', 'ferry'],
  ['yard', 'yard'], ['spur', 'spur'],
  ['street', 'street-case'], ['white', 'white-case'], ['street', 'street'], ['white', 'white'],
  ['yellow', 'yellow-case'], ['orange', 'orange-case'], ['yellow', 'yellow'], ['orange', 'orange'],
  ['trunk', 'trunk-case'], ['red', 'red-case'], ['trunk', 'trunk'], ['red', 'red'],
  ['tram', 'tram'], ['depot', 'depot'], ['rail', 'rail'], ['rail', 'rail-dash'],
].map(([kind, look]) => ({ look, list: roads(kind) }))

// Residential street grid: a bent lattice whose links are dropped at random.
let seed = 11
function rnd() {
  seed = (seed * 16807) % 2147483647
  return seed / 2147483647
}
const step = 21
const cols = 94, rows = 39
const nodes = []
for (let r = 0; r < rows; r++) {
  nodes.push([])
  for (let c = 0; c < cols; c++) {
    const x = 10 + c * step, y = 500 + r * step
    const bendX = 34 * Math.sin(y / 95 + x / 310), bendY = 36 * Math.sin(x / 120 - y / 260)
    nodes[r].push([(x + bendX + rnd() * 13).toFixed(1), (y + bendY + rnd() * 13).toFixed(1)])
  }
}
let grid = ''
for (let r = 0; r < rows - 1; r++) {
  for (let c = 0; c < cols - 1; c++) {
    if (rnd() < 0.8) grid += `M${nodes[r][c]}L${nodes[r][c + 1]}`
    if (rnd() < 0.8) grid += `M${nodes[r][c]}L${nodes[r + 1][c]}`
    if (rnd() < 0.12) grid += `M${nodes[r][c]}L${nodes[r + 1][c + 1]}`
  }
}

// sheet, centre x, baseline, width, text
const towns = [
  [0, 1466, 150, 462, 'Sillon de Bretagne'], [0, 1447, 305, 440, 'Les Thébaudières'], [1, 48, 414, 178, 'Le Golf'],
  [1, 567, 76, 132, 'Louis'], [1, 458, 241, 235, 'Plaisance'], [1, 495, 356, 350, 'Le Chêne Vert'], [1, 919, 215, 216, 'Barberie'],
  [1, 252, 538, 380, 'La Bouvardière'], [1, 528, 727, 323, 'Breil-Malville'], [1, 48, 825, 256, 'Moulin du'], [1, 49, 895, 476, 'Tillay-La Garotterie'],
  [1, 1072, 920, 310, 'Hauts-Pavés'], [1, 1323, 675, 257, 'Saint-Félix'], [2, 160, 766, 376, 'Saint-Donatien'], [2, 49, 1039, 348, 'Saint-Clément'],
  [2, 931, 172, 330, 'La Haluchère'], [2, 1151, 473, 408, 'Le Vieux Doulon'], [0, 1244, 1057, 142, 'Preux'], [0, 1452, 1157, 300, 'Crémetterie'],
  [4, 733, 49, 283, 'Solvardière'], [4, 400, 167, 338, 'Bourg Centre'], [4, 672, 267, 267, 'Pontpierre'], [4, 1364, 163, 342, 'Harlière Nord'],
  [4, 106, 376, 336, 'Bourgonnière'], [4, 1252, 352, 256, 'Moulin du'], [4, 1252, 423, 106, 'Bois'], [4, 1079, 545, 300, 'Bernardière'], [4, 495, 588, 263, 'Pelousière'],
  [5, 535, 183, 106, 'Zola'], [5, 389, 679, 271, 'Chantenay'], [5, 1378, 119, 144, 'Decré'], [6, 598, 141, 224, 'Malakoff'], [6, 557, 936, 366, 'Le Clos Toreau'],
  [6, 1310, 561, 440, 'Saint-Sébastien-'], [6, 1310, 637, 243, 'sur-Loire'], [7, 822, 134, 358, 'Basse-Goulaine'], [5, 967, 1099, 125, 'Rezé'], [5, 1540, 1104, 378, 'Pont Rousseau'],
]
const gates = [
  [0, 1023, 398, 330, 'Porte de Chézine'], [0, 1024, 452, 46, '34'], [0, 1029, 590, 330, 'Porte de Chézine'], [0, 1029, 644, 46, '34'],
  [0, 1096, 775, 284, "Porte d'Ar Mor"], [0, 1096, 829, 46, '33'], [0, 287, 520, 24, '2'], [0, 516, 656, 24, '2'], [0, 663, 748, 18, '1'], [0, 834, 819, 18, '1'],
  [3, -22, 94, 404, 'Porte de Sainte-Luce'], [2, 1358, 147, 48, '42'], [3, 318, 358, 262, "Porte d'Anjou"], [3, 318, 411, 48, '43'], [3, 546, 540, 262, "Porte d'Anjou"], [3, 546, 593, 48, '43'],
  [3, 688, 666, 354, 'Porte du Vignoble'], [3, 689, 718, 48, '44'], [3, 672, 893, 354, 'Porte du Vignoble'], [3, 672, 946, 48, '44'],
  [7, 389, 174, 356, 'Porte de Goulaine'], [7, 389, 228, 48, '45'], [7, 300, 315, 356, 'Porte de Goulaine'], [7, 300, 369, 48, '45'],
  [4, 1105, 619, 358, "Porte de l'Estuaire"], [4, 1106, 674, 48, '30'], [4, 1236, 738, 358, "Porte de l'Estuaire"], [4, 1237, 792, 48, '30'],
  [7, 187, 1007, 484, 'Porte de Saint-Sébastien'], [7, 189, 1061, 48, '46'], [7, 1100, 26, 50, '1.1'], [7, 1145, 102, 50, '1.1'], [7, 1229, 652, 50, '1.2'], [7, 1295, 776, 52, '1.2'],
]
// sheet, centre x, baseline, width, text, angle
const rivers = [
  [3, 487, 786, 230, 'La Loire', 0, 64], [4, 732, 1024, 152, 'La Loire', -8], [5, 500, 926, 150, 'La Loire', -22], [6, 952, 160, 160, 'La Loire', -55],
  [6, 1286, 158, 248, 'Le Gourdeau', -8], [5, 1110, 805, 472, 'La Loire - Bras de Pirmil', 0], [1, 1423, 218, 142, 'Le Cens', -6], [1, 1475, 700, 120, "L'Erdre", -52],
  [2, 1393, 1050, 120, 'La Loir', -22], [3, 1172, 62, 120, 'La Loi', -36], [3, 984, 1094, 360, 'Canal de Goulaine', -10], [5, 648, 802, 104, '25 m', 0],
]
const ferries = [[5, 722, 868, 280, 'Navibus Loire', -13], [5, 882, 672, 290, 'Navibus Loire', -68]]
const isles = [[6, 332, 444, 310, 'Île de Nantes', 52], [7, 112, 26, 182, 'Île Héron', 44]]
// Street names that follow the bend of their road.
const streets = [
  { id: 'mauves', d: 'M1392,846Q1450,832 1486,808Q1526,780 1554,744', w: 192, text: 'Boulevard de la Prairie de Mauves' },
  { id: 'loire', d: 'M1840,598Q1862,582 1892,580L1980,573', w: 116, text: 'Boulevard de la Loire' },
  { id: 'quai', d: 'M262,1205Q300,1193 330,1199Q356,1203 390,1203', w: 120, text: 'Quai Émile Cormerais' },
]
const shields = [[0, 285, 900, 150, 'M 75', 'y'], [3, 967, 405, 174, 'D 751', 'y'], [6, 462, 665, 176, 'D 119', 'y'], [3, 1251, 896, 174, 'M 215', 'w'], [7, 936, 399, 173, 'M 119', 'w'], [7, 837, 841, 176, 'D 319', 'w']]
const stations = [[4, 87, 556], [5, 315, 826], [5, 1493, 970], [6, 206, 53], [6, 1002, 444], [6, 1402, 1083]]
const trees = [[0, 550, 165], [0, 835, 180], [0, 450, 290], [0, 670, 205], [3, 290, 430], [3, 1125, 895], [3, 830, 970], [3, 1160, 105], [3, 235, 270], [3, 540, 280], [7, 410, 70], [7, 465, 770], [7, 1130, 365], [7, 1270, 370], [7, 1270, 195], [7, 1065, 185]]
</script>

<template>
  <div class="page">
    <header class="bar">
      <a class="brand">Company Finder</a>
      <nav class="nav"><a v-for="l in links" :key="l">{{ l }}</a></nav>
    </header>

    <form class="search">
      <label for="zip">Entre un code postal ci-dessous</label>
      <input id="zip" type="text" />
      <button type="button">Rechercher</button>
    </form>

    <section class="map">
      <svg class="canvas" viewBox="22 516 1920 750" width="1920" height="750">
        <defs><path v-for="s in streets" :id="s.id" :key="s.id" :d="s.d" /></defs>
        <rect x="22" y="516" width="1920" height="750" class="base" />
        <path :d="grid" class="grid-case" />
        <path :d="grid" class="grid" />
        <path v-for="(a, i) in areas" :key="'a' + i" :d="a.d" :transform="a.at" :class="a.kind" />
        <g v-for="p in passes" :key="p.look" :class="['line', p.look]">
          <path v-for="(r, i) in p.list" :key="i" :d="r.d" :transform="r.at" />
        </g>

        <g v-for="(t, i) in trees" :key="'w' + i" :transform="`${places[t[0]]} translate(${t[1]} ${t[2]})`" class="tree">
          <path d="M-12,18V-2M-12,-18a9,10 0 1 0 .1,0M12,18V-2M12,-20L2,-2H22Z" />
        </g>
        <g v-for="(t, i) in stations" :key="'s' + i" :transform="places[t[0]]"><rect :x="t[1] - 13" :y="t[2] - 13" width="26" height="26" class="station" /></g>
        <g :transform="places[5]" class="museum">
          <path d="M622,677H672M634,676V712M647,676V722M660,676V716M668,690V722M626,726q13,8 26,0t26,0" />
        </g>
        <g :transform="places[0]" class="bridge"><path d="M1084,848V910M1112,848V910M408,585l16,-22M424,597l14,-22M1038,295l-4,28M1066,300l-4,24" /></g>
        <g :transform="places[6]" class="bridge"><path d="M378,192V318M408,192V318M762,85L822,180M840,200L905,300M2,738V825M930,350L955,390" /></g>
        <g :transform="places[6]" class="bridge thin"><path d="M160,285L230,400M182,285L246,398M322,225L350,300M300,520L365,660" /></g>
        <g :transform="places[4]" class="bridge"><path d="M1295,830Q1302,900 1300,1020M1325,850Q1332,930 1330,1030M955,284H972M955,302H972M1140,662H1165M1140,678H1165" /></g>

        <g v-for="(t, i) in rivers" :key="'r' + i" :transform="places[t[0]]">
          <text :x="t[1]" :y="t[2]" :textLength="t[3]" lengthAdjust="spacingAndGlyphs" :transform="`rotate(${t[5]} ${t[1]} ${t[2] - 12})`" :font-size="t[6] || 43" class="river">{{ t[4] }}</text>
        </g>
        <g v-for="(t, i) in ferries" :key="'f' + i" :transform="places[t[0]]">
          <text :x="t[1]" :y="t[2]" :textLength="t[3]" lengthAdjust="spacingAndGlyphs" :transform="`rotate(${t[5]} ${t[1]} ${t[2] - 12})`" class="boat">{{ t[4] }}</text>
        </g>
        <text v-for="s in streets" :key="'q' + s.id" class="road-name">
          <textPath :href="'#' + s.id" :textLength="s.w" lengthAdjust="spacingAndGlyphs">{{ s.text }}</textPath>
        </text>
        <g v-for="(t, i) in towns" :key="'t' + i" :transform="places[t[0]]">
          <text :x="t[1]" :y="t[2]" :textLength="t[3]" lengthAdjust="spacingAndGlyphs" class="town">{{ t[4] }}</text>
        </g>
        <g v-for="(t, i) in gates" :key="'g' + i" :transform="places[t[0]]">
          <text :x="t[1]" :y="t[2]" :textLength="t[3]" lengthAdjust="spacingAndGlyphs" class="gate">{{ t[4] }}</text>
        </g>
        <g v-for="(t, i) in isles" :key="'i' + i" :transform="places[t[0]]">
          <text :x="t[1]" :y="t[2]" :textLength="t[3]" lengthAdjust="spacingAndGlyphs" :font-size="t[5]" class="isle-name">{{ t[4] }}</text>
        </g>
        <g :transform="places[0]">
          <text x="758" y="976" textLength="388" lengthAdjust="spacingAndGlyphs" class="town big">Saint-Herblain</text>
          <text x="249" y="630" textLength="218" lengthAdjust="spacingAndGlyphs" class="zone">Ouest Gros</text>
        </g>
        <g :transform="places[4]"><text x="1312" y="1038" textLength="162" lengthAdjust="spacingAndGlyphs" class="town small">Pont de</text><text x="1312" y="1092" textLength="158" lengthAdjust="spacingAndGlyphs" class="town small">Cheviré</text></g>
        <g :transform="places[6]"><text x="1335" y="227" textLength="198" lengthAdjust="spacingAndGlyphs" class="pinette">Île Pinette</text></g>
        <g :transform="places[1]"><text x="1371" y="1158" textLength="218" lengthAdjust="spacingAndGlyphs" class="town city">Nantes</text></g>
        <g v-for="(t, i) in shields" :key="'h' + i" :transform="places[t[0]]" :class="['shield', t[5]]">
          <rect :x="t[1] - t[3] / 2" :y="t[2] - 37" :width="t[3]" height="74" rx="8" />
          <text :x="t[1]" :y="t[2] + 18">{{ t[4] }}</text>
        </g>
      </svg>

      <div class="zoom"><a class="plus">+</a><a>−</a></div>

      <div class="marker">
        <svg width="27" height="27" viewBox="0 0 27 27">
          <path d="M1 1H17L26 9V26H1Z" fill="#c6d9fa" stroke="#a3a6ac" stroke-width="1.6" />
          <path d="M4 9Q4 6 7 6Q9 3 12 6Q14 7 12 9Z" fill="#fff" />
          <path d="M1.8 25Q5 19 10 18Q13 14 17 19Q22 21 25 25Z" fill="#58a83a" />
          <path d="M17 1V9H26Z" fill="#fff" stroke="#a3a6ac" stroke-width="1.6" />
          <path d="M27 13L14 27H19L27 19Z" fill="#e8ebee" />
        </svg>
        <span>Mark</span>
      </div>

      <div class="credit">
        <svg width="18" height="12" viewBox="0 0 18 12"><path d="M0 0h18v6H0z" fill="#4c7be1" /><path d="M0 6h18v6H0z" fill="#ffd500" /></svg>
        <a>Leaflet</a> | © <a>OpenStreetMap</a> contributors
      </div>
    </section>
  </div>
</template>

<style>
body { background: #fff; overflow: hidden; }
</style>

<style scoped>
.page { width: 1920px; height: 1342px; margin-left: 22px; font-family: "Open Sans", "Noto Sans", sans-serif; font-size: 23px; color: #000; display: flex; flex-direction: column; }
.bar { box-sizing: border-box; height: 90px; padding: 0 54px 12px 48px; border: 1px solid #e5e7eb; border-top: 0; background: #94a3b8; color: #fff; display: flex; justify-content: space-between; align-items: center; }
.nav { display: flex; gap: 48px; }
.brand { letter-spacing: -.08px; }
.nav a { letter-spacing: -.2px; }
.search { box-sizing: border-box; padding-top: 234px; display: flex; flex-direction: column; align-items: center; margin-top: -90px; flex: 0 0 516px; }
.search label { line-height: 38px; height: 60px; letter-spacing: -.1px; }
.search input { box-sizing: border-box; width: 336px; height: 66px; border: 3px solid #e5e7eb; border-radius: 8px; background: #fff; }
.search button { border: 0; background: none; padding: 0; font: inherit; color: inherit; line-height: 38px; letter-spacing: -.4px; }
.map { position: relative; height: 750px; flex: none; overflow: hidden; }
.canvas { display: block; }

.base, .homes { fill: #dedede; }
.plain { fill: #dadada; }
.grid-case { fill: none; stroke: #cdcdcd; stroke-width: 3; }
.grid { fill: none; stroke: #fff; stroke-width: 1.9; }
.land { fill: #f2efe9; }
.grass { fill: #cdebb0; }
.field { fill: #eef0d5; }
.industrial, .dusk { fill: #ebdbe8; }
.scrub { fill: #d6d99f; }
.retail { fill: #ffd6d1; }
.office { fill: #f0d9d9; }
.quarry { fill: #c5c3c3; }
.wood, .isle { fill: #add19e; }
.park { fill: #c8facc; }
.school { fill: #ffffe5; stroke: #f3eda0; stroke-width: 3; }
.pitch { fill: #aae0cb; }
.pink { fill: #ffc0cb; }
.cemetery { fill: #aacbaf; }
.brown { fill: #c7c7b4; }
.water { fill: #aad3df; }

.line { fill: none; stroke-linejoin: round; stroke-linecap: round; }
.stream { stroke: #aad3df; stroke-width: 17; }
.marsh { stroke: #5eb5e8; stroke-width: 4; }
.border { stroke: #a883b0; stroke-opacity: .65; stroke-width: 5; stroke-dasharray: 16 9 2 9; }
.footpath { stroke: #3b3bea; stroke-width: 5.5; stroke-dasharray: 1 12; }
.ferry { stroke: #6666ee; stroke-width: 4; stroke-dasharray: 26 22; }
.yard { stroke: #a8a8a8; stroke-width: 26; stroke-linecap: butt; stroke-dasharray: 60 3; }
.spur { stroke: #b0b0b0; stroke-width: 7; }
.depot { stroke: #7c7c7c; stroke-width: 28; }
.street-case { stroke: #c9c5c5; stroke-width: 11; }
.street { stroke: #fff; stroke-width: 8; }
.white-case { stroke: #bdbdbd; stroke-width: 16; }
.white { stroke: #fff; stroke-width: 12.5; }
.yellow-case { stroke: #c2c486; stroke-width: 25; }
.yellow { stroke: #f7fabf; stroke-width: 20; }
.orange-case { stroke: #d3a45c; stroke-width: 25; }
.orange { stroke: #fcd6a4; stroke-width: 20; }
.red-case { stroke: #dd7c67; stroke-width: 36; }
.red { stroke: #f9b29c; stroke-width: 31; }
.trunk-case { stroke: #cf5f80; stroke-width: 32; }
.trunk { stroke: #e892a2; stroke-width: 27; }
.tram { stroke: #777; stroke-width: 5; }
.rail { stroke: #707070; stroke-width: 12; stroke-linecap: butt; }
.rail-dash { stroke: #ddd; stroke-width: 4; stroke-linecap: butt; stroke-dasharray: 24 34; }
.tree { fill: none; stroke: #8bb47d; stroke-width: 3; }
.station { fill: #7981b0; }
.museum { fill: none; stroke: #4a7fb0; stroke-width: 8; }
.bridge { fill: none; stroke: #444; stroke-width: 4; }
.bridge.thin { stroke: #77684c; stroke-width: 3; }

text { font-family: "Noto Sans", sans-serif; text-anchor: middle; paint-order: stroke; stroke-linejoin: round; }
.town { font-size: 53px; fill: #3c3c3c; stroke: rgba(255, 255, 255, .7); stroke-width: 10px; }
.town.big { font-size: 57px; }
.town.city { font-size: 64px; }
.town.small { font-size: 43px; fill: #222; }
.gate { font-size: 45px; font-style: italic; fill: #b0252f; stroke: rgba(255, 255, 255, .75); stroke-width: 8px; }
.river { font-style: italic; fill: #6090c8; stroke: rgba(255, 255, 255, .4); stroke-width: 5px; }
.boat { font-size: 48px; fill: #7474ef; }
.road-name { font-size: 12.3px; text-anchor: start; fill: #2d2d20; stroke: rgba(250, 244, 200, .6); stroke-width: 2px; }
.isle-name { font-style: italic; fill: #222; stroke: rgba(255, 255, 255, .7); stroke-width: 9px; }
.zone { font-size: 42px; font-style: italic; fill: #86698a; stroke: rgba(255, 255, 255, .6); stroke-width: 7px; }
.pinette { font-size: 44px; font-style: italic; fill: #6f9960; stroke: rgba(255, 255, 255, .6); stroke-width: 7px; }
.shield text { font-size: 48px; fill: #54593a; }
.shield.y rect { fill: #f1f2d6; stroke: #cdd09c; stroke-width: 4; }
.shield.w rect { fill: #f2f2f2; stroke: #c9c9c9; stroke-width: 4; }
.shield.w text { fill: #555; }

.zoom { position: absolute; left: 15px; top: 15px; border: 3px solid rgba(0, 0, 0, .2); background-clip: padding-box; border-radius: 6px; overflow: hidden; }
.zoom a { display: block; box-sizing: border-box; width: 45px; height: 45px; padding-left: 1px; line-height: 45px; text-align: center; background: #fff; font-family: "DejaVu Sans", sans-serif; font-size: 28px; -webkit-text-stroke: .4px #000; }
.zoom .plus { border-bottom: 1px solid #ccc; }
.marker { position: absolute; left: 942px; top: 314px; width: 60px; height: 59px; border: 1px solid #b3b3ae; font: 18px/20px "Liberation Sans", Arial, sans-serif; }
.marker svg, .marker span { display: block; margin-left: -1px; }
.marker span { width: 38px; overflow: hidden; margin-top: -1px; }
.credit { position: absolute; right: 0; bottom: 0; height: 25px; box-sizing: border-box; padding: 0 8px 0 7px; background: rgba(255, 255, 255, .82); color: #333; font: 18px/24px "Liberation Sans", Arial, sans-serif; white-space: nowrap; }
.credit svg { margin-right: 5px; }
.credit a { color: #0078a8; }
</style>
